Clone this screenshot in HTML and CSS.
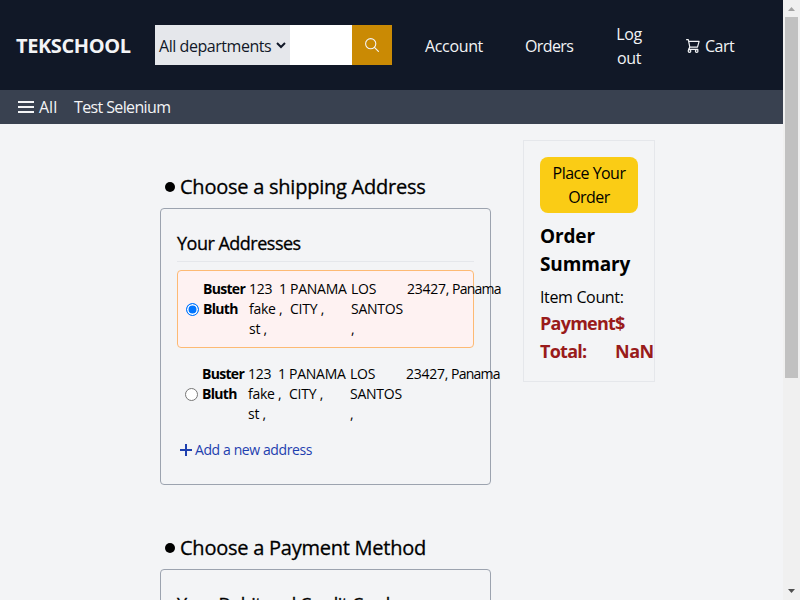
FILE: index.html
```html
<!DOCTYPE html>
<html lang="en">
<head>
<meta charset="utf-8">
<title>TEKSCHOOL</title>
<link rel="stylesheet" href="styles.css">
</head>
<body>
<div class="window">
  <div class="page">
    <header class="header">
      <a class="brand">TEKSCHOOL</a>
      <div class="search">
        <div class="departments"><span>All departments</span>
          <svg width="10" height="7" viewBox="0 0 10 7"><path d="M1 1l4 4 4-4" fill="none" stroke="#111827" stroke-width="2"/></svg>
        </div>
        <div class="search-input"></div>
        <div class="search-button">
          <svg width="14" height="14" viewBox="0 0 14 14" fill="none" stroke="#f3f4f6" stroke-width="1.1" stroke-linecap="round"><circle cx="5.7" cy="5.7" r="5.1"/><path d="M9.4 9.4l4 4"/></svg>
        </div>
      </div>
      <a class="link account">Account</a>
      <a class="link orders">Orders</a>
      <a class="link logout">Log<br>out</a>
      <a class="link cart"><svg width="14" height="14" viewBox="0 0 14 14" fill="none" stroke="#f3f4f6" stroke-width="1.2" stroke-linejoin="round" stroke-linecap="round"><path d="M.6.7h1.7l1.5 7.4M2.7 2.4h10.4l-1.6 5.7H3.8l-1.2 2.3h9.2"/><circle cx="3.5" cy="12" r="1.3"/><circle cx="10.7" cy="12" r="1.3"/></svg><span>Cart</span></a>
    </header>
    <nav class="subnav">
      <svg width="16" height="12" viewBox="0 0 16 12"><path d="M0 1h16M0 6h16M0 11h16" stroke="#f3f4f6" stroke-width="2"/></svg>
      <span class="all">All</span>
      <span class="user">Test Selenium</span>
    </nav>
    <main class="content">
      <div class="steps">
        <section class="step">
          <h2><i class="dot"></i><span>Choose a shipping Address</span></h2>
          <div class="card address-card">
            <h3><span>Your Addresses</span></h3>
            <div class="address selected">
              <i class="radio checked"></i>
              <b>Buster<br>Bluth</b><span>123<br>fake<br>st ,</span><span>1<br>,</span><span>PANAMA<br>CITY ,</span><span>LOS<br>SANTOS<br>,</span><span>23427,</span><span class="country">Panama</span>
            </div>
            <div class="address">
              <i class="radio"></i>
              <b>Buster<br>Bluth</b><span>123<br>fake<br>st ,</span><span>1<br>,</span><span>PANAMA<br>CITY ,</span><span>LOS<br>SANTOS<br>,</span><span>23427,</span><span class="country">Panama</span>
            </div>
            <a class="add"><svg width="12" height="12" viewBox="0 0 12 12"><path d="M6 0v12M0 6h12" stroke="#1e40af" stroke-width="2"/></svg><span>Add a new address</span></a>
          </div>
        </section>
        <section class="step">
          <h2><i class="dot"></i><span>Choose a Payment Method</span></h2>
          <div class="card payment-card">
            <h3><span>Your Debit and Credit Cards</span></h3>
          </div>
        </section>
      </div>
      <aside class="summary">
        <button class="place">Place Your<br>Order</button>
        <h2 class="summary-title">Order<br>Summary</h2>
        <p class="count">Item Count:</p>
        <div class="total"><span>Payment<br>Total:</span><span class="amount">$<br>NaN</span></div>
      </aside>
    </main>
  </div>
  <div class="scrollbar">
    <svg width="7" height="4" viewBox="0 0 7 4"><path d="M0 4L3.5 0 7 4z" fill="#a3a3a3"/></svg>
    <div class="thumb"></div>
    <svg class="down" width="7" height="4" viewBox="0 0 7 4"><path d="M0 0L3.5 4 7 0z" fill="#505050"/></svg>
  </div>
</div>
</body>
</html>
```
FILE: styles.css
```css
* { box-sizing: border-box; margin: 0; padding: 0; }
body { font: 16px/24px "Open Sans", "Noto Sans", sans-serif; color: #000; letter-spacing: -0.35px; }
svg { display: block; flex: none; }
.window { display: flex; width: 800px; height: 600px; overflow: hidden; }
.page { width: 783px; height: 600px; background: #f3f4f6; overflow: hidden; }
.header { display: flex; align-items: center; height: 90px; background: #111827; color: #f3f4f6; white-space: nowrap; }
.brand { width: 139px; margin-left: 16px; padding-top: 2px; font-size: 20px; font-weight: 700; letter-spacing: -0.4px; }
.search { display: flex; width: 237px; height: 40px; }
.departments { display: flex; align-items: center; width: 135px; padding: 2px 4px 0; background: #e5e7eb; color: #111827; justify-content: space-between; letter-spacing: -0.45px; }
.departments svg { margin-top: -2px; }
.search-input { width: 62px; background: #fff; }
.search-button { display: grid; place-items: center; width: 40px; background: #ca8a04; }
.link { padding-top: 1px; }
.account { width: 100px; margin-left: 33px; }
.orders { width: 91px; letter-spacing: -0.6px; }
.logout { width: 26px; text-align: center; }
.cart { display: flex; align-items: center; gap: 5px; margin-left: 44px; letter-spacing: -0.5px; }
.subnav { display: flex; align-items: center; height: 34px; padding-left: 18px; background: #394150; color: #f3f4f6; }
.all { width: 35px; margin-left: 5px; letter-spacing: 0; }
.user { padding-bottom: 1px; letter-spacing: -0.63px; }
.content { display: flex; align-items: flex-start; gap: 32px; padding: 16px 0 0 160px; }
.steps { width: 331px; padding-top: 33px; }
.step { margin-bottom: 49px; }
h2 { display: flex; align-items: center; height: 28px; font-size: 20px; font-weight: 500; line-height: 28px; letter-spacing: -0.24px; white-space: nowrap; }
h2 span, h3 span { -webkit-text-stroke: 0.3px #000; }
.dot { width: 10px; height: 10px; margin: -1px 5px 0; border-radius: 50%; background: #000; }
.card { margin-top: 7px; padding: 20px 16px 0; border: 1px solid #9ca3af; border-radius: 4px; }
.address-card { height: 277px; }
.payment-card { height: 200px; }
h3 { height: 33px; border-bottom: 1px solid #e5e7eb; font-size: 18px; font-weight: 500; line-height: 28px; letter-spacing: -0.5px; white-space: nowrap; }
.address { display: grid; grid-template-columns: 17px 46px 30px 11px 61px 56px 45px 48px; width: 297px; height: 76px; margin-top: 8px; padding: 8px 0 8px 8px; font-size: 14px; line-height: 20px; letter-spacing: -0.25px; white-space: nowrap; }
.address b { letter-spacing: -0.7px; }
.country { letter-spacing: -0.75px; }
.selected { height: 78px; border: 1px solid #fdba74; border-radius: 4px; background: #fef2f2; }
.radio { align-self: center; width: 13px; height: 13px; border: 1px solid #767676; border-radius: 50%; background: #fff; }
.checked { border-color: #0075ff; background: #0075ff; box-shadow: inset 0 0 0 1.5px #fff; }
.add { display: flex; align-items: center; gap: 3px; margin: 8px 0 0 3px; color: #1e40af; font-size: 14px; line-height: 20px; letter-spacing: -0.4px; }
.summary { width: 132px; height: 242px; padding: 16px; border: 1px solid #e5e7eb; white-space: nowrap; }
.place { display: block; width: 98px; height: 56px; border: 0; border-radius: 8px; background: #facc15; font: inherit; letter-spacing: -0.55px; color: #000; }
.summary-title { display: block; height: 56px; margin: 9px 0 7px; font-weight: 700; font-size: 19px; letter-spacing: -0.15px; }
.total { display: flex; color: #991b1b; font-size: 18px; font-weight: 700; line-height: 28px; letter-spacing: -0.75px; }
.total span:first-child { width: 75px; }
.amount { letter-spacing: -0.5px; }
.scrollbar { display: flex; flex-direction: column; align-items: center; width: 17px; height: 600px; padding-top: 7px; background: #f0f0f0; }
.thumb { width: 13px; height: 361px; margin-top: 6px; background: #c1c1c1; }
.down { margin-top: 211px; }
```
